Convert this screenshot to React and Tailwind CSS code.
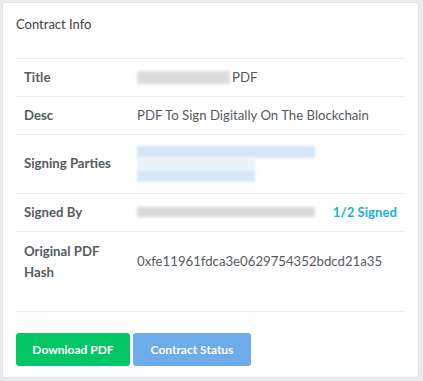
import React from 'react';

const font = { fontFamily: 'Lato, "Open Sans", sans-serif' };

function Blur({ className }) {
    return <div className={`rounded-[1px] blur-[1.5px] ${className}`} />;
}

export default function App() {
    return (
        <div className="w-[423px] h-[381px] bg-[#e8ecef] pt-[2px] pl-[2px] pr-[4px] pb-[3px]" style={font}>
            <div className="h-full bg-white border border-[#dee2e6] rounded-[3px] flex flex-col">
                <div className="px-[13px] pt-[13px] pb-[13px] flex flex-col">
                    <h2 className="text-[13px] text-[#3a3f44] leading-[16px]">Contract Info</h2>
                    <table className="mt-[26px] w-full text-[13.2px] text-[#555b61]">
                        <tbody>
                            <tr className="border-t border-[#e9ecef] h-[38px]">
                                <td className="pl-[8px] w-[121px] font-bold">Title</td>
                                <td className="pr-[8px]">
                                    <div className="flex items-center gap-[2px]">
                                        <Blur className="w-[93px] h-[13px] bg-[#dcdcdc]" />
                                        <span>PDF</span>
                                    </div>
                                </td>
                            </tr>
                            <tr className="border-t border-[#e9ecef] h-[38px]">
                                <td className="pl-[8px] font-bold">Desc</td>
                                <td className="pr-[8px]">PDF To Sign Digitally On The Blockchain</td>
                            </tr>
                            <tr className="border-t border-[#e9ecef] h-[59px]">
                                <td className="pl-[8px] font-bold">Signing Parties</td>
                                <td className="pr-[8px]">
                                    <div className="flex flex-col">
                                        <Blur className="w-[178px] h-[12px] bg-[#d4e5f8]" />
                                        <Blur className="w-[118px] h-[12px] bg-[#eaf2fc]" />
                                        <Blur className="w-[118px] h-[12px] bg-[#d8e7f8]" />
                                    </div>
                                </td>
                            </tr>
                            <tr className="border-t border-[#e9ecef] h-[38px]">
                                <td className="pl-[8px] font-bold">Signed By</td>
                                <td className="pr-[8px]">
                                    <div className="flex items-center justify-between">
                                        <Blur className="w-[178px] h-[10px] bg-[#d8d8d8]" />
                                        <span className="font-bold text-[#1bb1d6]">1/2 Signed</span>
                                    </div>
                                </td>
                            </tr>
                            <tr className="border-t border-[#e9ecef]">
                                <td className="pl-[8px] pt-[9px] pb-[15px] font-bold leading-[21px]">Original PDF<br />Hash</td>
                                <td className="pr-[8px] pb-[6px]">0xfe11961fdca3e0629754352bdcd21a35</td>
                            </tr>
                        </tbody>
                    </table>
                </div>
                <div className="mx-[13px] flex-1 border-t border-[#e9ecef] flex items-end pb-[11px]">
                    <div className="flex gap-[3px]">
                        <button className="h-[33px] w-[114px] rounded-[3px] bg-[#05c664] text-white text-[12px] font-bold">Download PDF</button>
                        <button className="h-[33px] w-[118px] rounded-[3px] bg-[#6eabe9] text-white text-[12px] font-bold">Contract Status</button>
                    </div>
                </div>
            </div>
        </div>
    );
}
